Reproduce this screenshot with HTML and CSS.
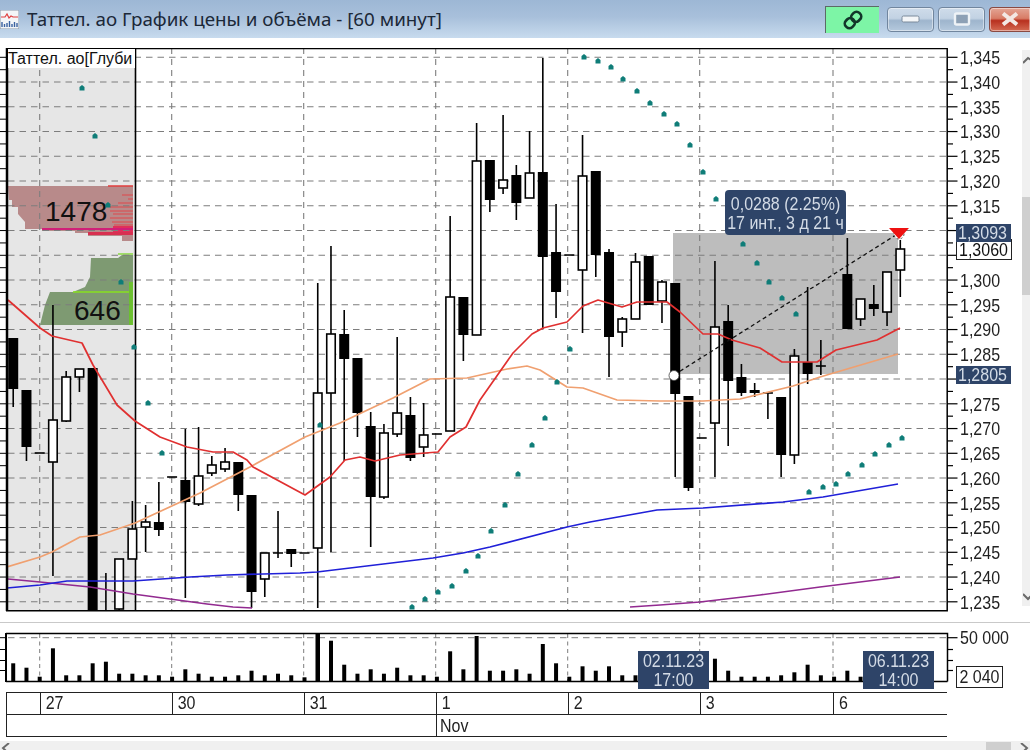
FILE: index.html
```html
<!DOCTYPE html>
<html lang="ru">
<head>
<meta charset="utf-8">
<title>Таттел. ао График цены и объёма</title>
<link rel="stylesheet" href="styles.css">
</head>
<body>
<div class="window">
  <header class="titlebar">
    <svg class="app-icon" viewBox="0 0 19 19">
      <rect x="0" y="0" width="19" height="19" fill="#f4f6f8" stroke="#8a98a8"/>
      <path d="M1 7h4l2-3 2 4 2-2 2 1h5" fill="none" stroke="#e04040" stroke-width="1.2"/>
      <path d="M2 17v-5M4.500 17v-3M7 17v-4M9.500 17v-6M12 17v-3M14.500 17v-5M17 17v-4" stroke="#3a62a0" stroke-width="1.400"/>
    </svg>
    <h1 class="title">Таттел. ао График цены и объёма - [60 минут]</h1>
    <div class="link-box">
      <svg class="link-icon" viewBox="0 0 20 20">
        <g fill="none" stroke="#12362a" stroke-width="2.600" transform="rotate(-45 10 10)">
          <rect x="0.500" y="5.500" width="10" height="9" rx="4"/>
          <rect x="9.500" y="5.500" width="10" height="9" rx="4"/>
        </g>
      </svg>
    </div>
    <button class="winbtn">
      <svg class="glyph" viewBox="0 0 20 10"><rect x="1" y="2" width="17" height="6" rx="1.500" fill="#f4f6f8" stroke="#7b8a9b"/></svg>
    </button>
    <button class="winbtn">
      <svg class="glyph" viewBox="0 0 20 14"><rect x="3" y="1.500" width="14" height="11" rx="1.500" fill="#8da0b5" stroke="#eef2f6" stroke-width="2.400"/></svg>
    </button>
    <button class="winbtn closebtn">
      <svg class="glyph" viewBox="0 0 20 14"><path d="M3 1.500L17 12.500M17 1.500L3 12.500" stroke="#f3e8e4" stroke-width="4"/></svg>
    </button>
  </header>

  <section class="price-row">
    <div class="price-plot">
      <svg id="price" class="plot-svg" viewBox="0 48 958 564" width="958" height="564"></svg>
      <div class="pane-label">Таттел. ао[Глуби</div>
      <div class="measure"><span class="tall">0,0288 (2.25%)</span><span class="tall">17 инт., 3 д 21 ч</span></div>
    </div>
    <div class="price-axis">
      <span>1,345</span><span>1,340</span><span>1,335</span><span>1,330</span><span>1,325</span><span>1,320</span>
      <span>1,315</span><span class="covered">1,310</span><span class="covered">1,305</span><span>1,300</span><span>1,295</span><span>1,290</span>
      <span>1,285</span><span class="covered">1,280</span><span>1,275</span><span>1,270</span><span>1,265</span><span>1,260</span>
      <span>1,255</span><span>1,250</span><span>1,245</span><span>1,240</span><span>1,235</span>
      <div class="tag tag-plain tag-last"><b class="tall">1,3060</b></div>
      <div class="tag tag-dark tag-high"><b class="tall">1,3093</b></div>
      <div class="tag tag-dark tag-low"><b class="tall">1,2805</b></div>
    </div>
    <div class="vscroll">
      <svg class="chev chev-up" viewBox="0 0 8 8"><path d="M0 7L5 2L8 4" fill="none" stroke="#6a6a6a" stroke-width="2"/></svg>
      <div class="vthumb"></div>
      <svg class="chev chev-down" viewBox="0 0 8 8"><path d="M0 1L5 6L8 3" fill="none" stroke="#6a6a6a" stroke-width="2"/></svg>
    </div>
  </section>

  <section class="volume-row">
    <svg id="volume" class="plot-svg" viewBox="0 628 958 62" width="958" height="62"></svg>
    <div class="volume-axis">
      <span class="volume-top tall">50 000</span>
      <span class="volume-now"><b class="tall">2 040</b></span>
    </div>
    <div class="datebox datebox-a"><span class="tall">02.11.23</span><span class="tall">17:00</span></div>
    <div class="datebox datebox-b"><span class="tall">06.11.23</span><span class="tall">14:00</span></div>
  </section>

  <section class="dates">
    <div class="day-row">
      <div class="cell"></div>
      <div class="cell"><span class="mid">27</span></div>
      <div class="cell"><span class="mid">30</span></div>
      <div class="cell"><span class="mid">31</span></div>
      <div class="cell"><span class="mid">1</span></div>
      <div class="cell"><span class="mid">2</span></div>
      <div class="cell"><span class="mid">3</span></div>
      <div class="cell"><span class="mid">6</span></div>
    </div>
    <div class="month-row">
      <div class="cell"></div>
      <div class="cell"><span class="mid">Nov</span></div>
    </div>
  </section>

  <footer class="hscroll">
    <svg class="hchev" viewBox="0 0 10 8"><path d="M9 0L3 5L6 8" fill="none" stroke="#6a6a6a" stroke-width="2"/></svg>
    <div class="hthumb"></div>
    <svg class="hchev" viewBox="0 0 10 8"><path d="M1 0L7 5L4 8" fill="none" stroke="#6a6a6a" stroke-width="2"/></svg>
  </footer>
</div>
<script src="chart.js"></script>
</body>
</html>
```

FILE: styles.css
```css
* { box-sizing: border-box; }
html, body { margin: 0; padding: 0; background: #fff; }
body { width: 1030px; height: 750px; overflow: hidden; font-family: "Liberation Sans", Arial, sans-serif; color: #1a1a1a; }
.window { width: 1030px; height: 750px; display: flex; flex-direction: column; filter: blur(.3px); }
.tall { display: block; font-weight: 400; transform: scaleY(1.2); }
.mid { display: inline-block; transform: scaleY(1.1); }

.titlebar { height: 38px; flex: none; display: flex; align-items: center; background: linear-gradient(#9db7d5, #a8c0db 45%, #c8dbee); padding-right: 0; }
.app-icon { width: 19px; height: 19px; flex: none; margin-left: 0; margin-top: 1px; }
.title { flex: 1; margin: 0 0 0 8px; font: 400 18.800px "Noto Sans", sans-serif; color: #1b2838; white-space: nowrap; }
.link-box { width: 54px; height: 27px; margin-right: 8px; background: #7df5a6; border-left: 1px solid #5c6a66; border-top: 1px solid #5c6a66; display: flex; align-items: center; justify-content: center; }
.link-icon { width: 20px; height: 20px; }
.winbtn { width: 47px; height: 25px; margin: 0 4px 0 0; padding: 0; border: 1px solid #71869e; border-radius: 4px; background: linear-gradient(#cfdcea, #c2d2e3 45%, #9eb5cd 55%, #b5c9dd); box-shadow: inset 0 0 0 1px rgba(255,255,255,.45); display: flex; align-items: center; justify-content: center; }
.closebtn { width: 41px; margin-right: 0; border-color: #8a4a42; border-right: none; border-radius: 4px 0 0 4px; background: linear-gradient(#e3a595, #d87c66 45%, #b8301f 55%, #d46a52); }
.glyph { width: 20px; height: 14px; }

.price-row { position: relative; height: 585px; flex: none; display: flex; padding-top: 7px; border-bottom: 1px solid #c9c9c9; }
.price-plot { position: relative; width: 958px; flex: none; margin-top: 3px; height: 564px; }
.plot-svg { display: block; }
.pane-label { position: absolute; left: 8px; top: 1px; width: 127px; height: 19px; background: #fff; font-size: 16px; line-height: 20px; white-space: nowrap; color: #111; }
.measure { position: absolute; left: 725px; top: 142px; width: 121px; height: 45px; background: #2e4468; border-radius: 4px; color: #d3dbe6; font-size: 16px; line-height: 19px; text-align: center; white-space: nowrap; padding-top: 4px; }

.price-axis { position: relative; width: 64px; flex: none; display: flex; flex-direction: column; font-size: 16px; color: #222; }
.price-axis > span { height: 24.750px; line-height: 25px; padding-left: 2px; flex: none; transform: scaleY(1.2); }
.price-axis > .covered { visibility: hidden; }
.tag { position: absolute; left: -2px; padding-left: 2px; font-size: 16px; white-space: nowrap; }
.tag-dark { background: #2e4468; color: #d3dbe6; width: 55px; height: 18px; line-height: 18px; }
.tag-plain { background: #fff; border: 1.500px solid #222; width: 56px; height: 21px; line-height: 19px; top: 194px; color: #111; }
.tag-high { top: 179px; }
.tag-low { top: 321px; }

.vscroll { position: relative; width: 8px; flex: none; height: 556px; margin-top: 5px; background: #f0f0f0; }
.vthumb { position: absolute; left: 0; top: 147px; width: 8px; height: 98px; background: #cfcfcf; }
.chev { position: absolute; left: 1px; width: 8px; height: 8px; }
.chev-up { top: 6px; }
.chev-down { top: 543px; }

.volume-row { position: relative; height: 62px; flex: none; margin-top: 5px; }
.volume-axis { position: absolute; left: 958px; top: 0; font-size: 16px; color: #222; }
.volume-top { position: absolute; left: 2px; top: 1px; line-height: 18px; white-space: nowrap; }
.volume-now { position: absolute; left: -2px; top: 38px; width: 47px; height: 22px; border: 1.500px solid #222; background: #fff; line-height: 19px; text-align: center; white-space: nowrap; }
.datebox { position: absolute; top: 23px; width: 71px; height: 38px; background: #2e4468; color: #d3dbe6; font-size: 16px; line-height: 19px; text-align: center; white-space: nowrap; }
.datebox-a { left: 638px; }
.datebox-b { left: 863px; }

.dates { margin: 2px 0 0 6px; width: 941px; flex: none; border-top: 1.500px solid #222; border-bottom: 1.500px solid #222; height: 45px; display: flex; flex-direction: column; font-size: 16px; color: #222; }
.day-row { height: 22px; flex: none; display: grid; grid-template-columns: 33.700px 132px 132px 132px 132px 132px 133.300px 113px; border-bottom: 1.500px solid #222; }
.month-row { flex: 1; display: grid; grid-template-columns: 430px 1fr; }
.cell { border-left: 1.500px solid #222; padding-left: 5px; line-height: 19px; }
.month-row .cell + .cell { padding-left: 3px; line-height: 21px; }

.hscroll { flex: none; margin-top: 4px; height: 10px; background: #f0f0f0; display: flex; align-items: center; padding: 0; }
.hchev { width: 10px; height: 8px; flex: none; margin-top: 2px; }
.hthumb { width: 25px; height: 9px; margin: 1px 9px 0 auto; background: #cfcfcf; }
```

FILE: chart.js
```js
var NS = "http://www.w3.org/2000/svg";
function add(svg, name, attrs) {
  var el = document.createElementNS(NS, name);
  for (var k in attrs) el.setAttribute(k, attrs[k]);
  svg.appendChild(el);
  return el;
}
var INK = "#000", GRID = "#7d7d7d";
function cx(i) { return 39.7 + 13.24 * (i - 2); }
var vGrid = [39.7, 171.7, 303.7, 435.7, 567.7, 699.7, 833];

/* ---------- price pane ---------- */
var p = document.getElementById("price");
var defs = add(p, "defs", {});
var clip = document.createElementNS(NS, "clipPath");
clip.setAttribute("id", "frame");
defs.appendChild(clip);
add(clip, "rect", { x: 7, y: 48, width: 940, height: 562.5 });
var body = add(p, "g", { "clip-path": "url(#frame)" });

add(body, "rect", { x: 7, y: 48, width: 128, height: 563, fill: "#e6e6e6" });

/* depth histogram */
add(body, "path", { fill: "#b88a8a", d: "M8 186H133V241H122V236H88V233H75V231H42V229H25V222L18 214V207H12V200H9Z" });
["195:122", "199:128", "203:118", "207:110", "211:110", "214:113", "218:110", "222:112", "225:114"].forEach(function (s) {
  var a = s.split(":");
  add(body, "path", { d: "M" + a[1] + " " + a[0] + "H133", stroke: "#e0474a", "stroke-width": 1 });
});
add(body, "path", { d: "M108 186H133", stroke: "#e03c3c", "stroke-width": 1.5 });
add(body, "rect", { x: 113, y: 226, width: 20, height: 6, fill: "#e0305a" });
add(body, "rect", { x: 88, y: 232, width: 45, height: 3, fill: "#d83050" });
add(body, "path", { d: "M42 229H133", stroke: "#d02078", "stroke-width": 2 });
add(body, "path", { fill: "#7e9a72", d: "M40 325L45 305L50 292H73L85 287L90 277L91 258H118L122 255H133V325Z" });
add(body, "path", { d: "M73 292H133", stroke: "#88e020", "stroke-width": 1.500 });
add(body, "path", { d: "M118 254H133", stroke: "#88d840", "stroke-width": 1.500 });
add(body, "rect", { x: 129, y: 282, width: 4, height: 43, fill: "#6cc030" });

/* measure area */
add(body, "rect", { x: 673, y: 233, width: 225, height: 141, fill: "#bdbdbd" });

/* grid */
var k, y;
for (k = 0; k <= 22; k++) {
  y = 57.3 + 24.75 * k;
  add(body, "path", { d: "M8 " + y + "H947", stroke: GRID, "stroke-width": 1.100, "stroke-dasharray": "6.500 5" });
}
vGrid.forEach(function (x) {
  add(body, "path", { d: "M" + x + " 48V611", stroke: GRID, "stroke-width": 1.100, "stroke-dasharray": "6 5" });
});

/* pane text */
function bigText(x, y, s) {
  var t = add(body, "text", { x: x, y: y, "font-family": "Liberation Sans", "font-size": 28, fill: "#111" });
  t.textContent = s;
}
bigText(45, 221, "1478");
bigText(74, 320, "646");
add(body, "path", { d: "M135.500 48V611", stroke: INK, "stroke-width": 1.600 });

/* candles: index, high, low, body top, body bottom, f=filled h=hollow d=doji w=wick */
var C = [
  [0,338,407,338,389,"f"],[1,390,461,390,447,"f"],[2,453,453,453,453,"d"],[3,305,576,420,462,"h"],
  [4,371,422,377,421,"h"],[5,369,392,369,377,"h"],[6,368,612,368,612,"f"],[7,573,612,0,0,"w"],
  [8,559,610,559,609,"h"],[9,501,559,529,559,"h"],[10,505,552,522,527,"h"],[11,482,536,522,530,"f"],
  [12,477,477,477,477,"d"],[13,429,598,480,502,"f"],[14,427,506,476,504,"h"],[15,456,476,465,473,"h"],
  [16,448,472,462,469,"h"],[17,462,511,462,495,"f"],[18,495,608,495,592,"f"],[19,553,597,553,579,"h"],
  [20,511,558,553,553,"d"],[21,549,567,549,554,"f"],[22,553,553,553,553,"d"],[23,283,608,393,548,"h"],
  [24,246,552,334,393,"h"],[25,310,461,334,359,"f"],[26,358,437,358,413,"f"],[27,412,547,426,497,"f"],
  [28,424,499,433,497,"h"],[29,337,437,413,434,"h"],[30,397,461,415,458,"f"],[31,403,457,435,447,"h"],
  [32,434,434,434,434,"d"],[33,216,431,297,431,"h"],[34,297,361,297,335,"f"],[35,123,335,161,335,"h"],
  [36,160,212,160,200,"f"],[37,115,194,180,188,"h"],[38,165,220,175,203,"f"],[39,131,198,173,198,"h"],
  [40,58,329,172,257,"f"],[41,204,318,252,292,"f"],[42,255,255,255,255,"d"],[43,135,333,176,270,"h"],
  [44,171,277,171,255,"f"],[45,249,377,252,337,"f"],[46,317,347,319,332,"h"],[47,253,319,262,319,"h"],
  [48,256,305,256,305,"f"],[49,280,323,282,301,"h"],[50,283,477,283,394,"f"],[51,396,491,396,488,"f"],
  [52,438,438,438,438,"d"],[53,261,477,327,423,"h"],[54,305,446,321,381,"f"],[55,364,396,377,393,"f"],
  [56,383,397,390,393,"f"],[57,393,419,393,393,"d"],[58,397,477,397,455,"f"],[59,349,464,356,455,"h"],
  [60,287,384,362,374,"f"],[61,340,375,366,366,"d"],[63,238,329,274,329,"f"],[64,299,326,299,319,"h"],
  [65,285,316,304,309,"f"],[66,272,326,272,312,"h"],[67,240,297,249,270,"h"]
];
C.forEach(function (c) {
  var x = cx(c[0]);
  add(body, "path", { d: "M" + x + " " + c[1] + "V" + c[2], stroke: INK, "stroke-width": 1.600 });
  if (c[5] === "f") {
    add(body, "rect", { x: x - 5, y: c[3], width: 10, height: c[4] - c[3], fill: INK });
  } else if (c[5] === "h") {
    add(body, "rect", { x: x - 4.25, y: c[3], width: 8.5, height: c[4] - c[3], fill: "#fff", stroke: INK, "stroke-width": 1.600 });
  } else if (c[5] === "d") {
    add(body, "path", { d: "M" + (x - 5) + " " + c[3] + "H" + (x + 5), stroke: INK, "stroke-width": 1.600 });
  }
});

/* moving averages */
function line(svg, pts, color, w) {
  add(svg, "polyline", { points: pts, fill: "none", stroke: color, "stroke-width": w, "stroke-linejoin": "round" });
}
line(body, "8,579 40,582 90,587 133,594 207,604 233,607 252,608", "#922a90", 1.700);
line(body, "630,607 660,605 700,602 760,595 820,587 900,577", "#922a90", 1.700);
line(body, "7,588 40,585 67,581 133,581 190,577 227,575 300,573 317,572 433,558 463,553 490,547 567,527 590,522 657,510 703,508 783,502 823,497 898,484", "#2020d8", 1.700);
line(body, "7,567 40,557 52,552 80,537 100,535 135,523 200,493 250,467 305,437 340,423 393,398 430,379 467,378 507,369 527,366 540,370 567,387 583,388 617,400 660,401 703,401 740,399 793,386 820,377 898,354", "#f0a070", 1.700);
line(body, "8,300 40,328 52,336 82,343 93,365 117,405 135,421 160,437 187,447 213,452 233,452 247,460 253,467 305,495 330,477 345,460 360,457 375,461 400,455 438,452 450,437 466,427 480,400 513,353 532,334 543,328 567,322 583,306 598,300 622,307 637,302 667,302 680,312 703,334 718,334 732,340 760,348 782,362 817,362 836,350 877,340 900,328", "#e03030", 1.700);

/* parabolic dots */
var D = [[82,88],[95,136],[108,205],[121,282],[134,347],[148,403],[162,453],[320,425],[412,607],[425,599],[438,592],[452,586],[466,571],[478,556],[491,531],[505,505],[518,474],[532,445],[545,418],[557,382],[570,349],[584,57],[598,61],[611,67],[623,79],[637,91],[650,103],[664,114],[677,124],[690,145],[703,172],[716,199],[743,244],[757,263],[769,282],[782,298],[796,314],[809,492],[823,487],[836,484],[848,474],[862,465],[875,454],[889,445],[902,438]];
D.forEach(function (d) {
  add(body, "path", { d: "M" + (d[0] - 2.5) + " " + (d[1] + 2.5) + "V" + (d[1] - 1) + "L" + d[0] + " " + (d[1] - 3) + "L" + (d[0] + 2.5) + " " + (d[1] - 1) + "V" + (d[1] + 2.5) + "Z", fill: "#0f7d78" });
});

/* measure diagonal and handles */
add(body, "path", { d: "M674 375L899 233", stroke: "#111", "stroke-width": 1.300, "stroke-dasharray": "4 3", fill: "none" });
add(body, "circle", { cx: 674, cy: 375.500, r: 5, fill: "#fff", stroke: "#444", "stroke-width": 0.800 });
add(body, "circle", { cx: 899, cy: 234, r: 5, fill: "#fff", stroke: "#333", "stroke-width": 0.800, "stroke-dasharray": "2 2" });
add(body, "path", { d: "M889 228H909L899 239Z", fill: "#ee1111" });

/* frame and ticks */
add(p, "path", { d: "M7 48V611", stroke: INK, "stroke-width": 2.500 });
add(p, "path", { d: "M6 48.500H947.200V610.800H6", stroke: INK, "stroke-width": 1.500, fill: "none" });
for (k = 0; k <= 44; k++) {
  y = 57.3 + 12.375 * k;
  add(p, "path", { d: "M0 " + y + "H6", stroke: INK, "stroke-width": 1 });
  add(p, "path", { d: "M947 " + y + "H" + (k % 2 ? 953 : 957.500), stroke: INK, "stroke-width": 1.200 });
}

/* ---------- volume pane ---------- */
var v = document.getElementById("volume");
vGrid.forEach(function (x) {
  add(v, "path", { d: "M" + x + " 634V681", stroke: GRID, "stroke-width": 1, "stroke-dasharray": "4 3.500" });
});
add(v, "path", { d: "M8 637.700H947", stroke: GRID, "stroke-width": 1, "stroke-dasharray": "6.500 5" });
var V = [663.3,667.7,676.7,648.3,675.3,675.3,663.3,661.7,673.7,673.7,675.3,675.3,676.7,669.3,673.7,676.7,676.7,675.3,670.7,675.3,673.7,675.3,677.3,633.3,640.7,664.7,673.7,669.3,673.7,667.7,675.3,675.3,676.7,651.3,669.3,636,670.7,670.7,669.3,673.7,644,663.3,676.7,666.3,670.7,666.3,675.3,675.3,0,0,0,0,0,658.7,670.7,676.7,676.7,676.7,675.3,672.3,664.7,675.3,676.7,670.7,676.7];
V.forEach(function (top, i) {
  if (!top) return;
  var w = i === 23 ? 4.500 : 4;
  add(v, "path", { d: "M" + cx(i) + " " + top + "V681.500", stroke: "#000", "stroke-width": w });
});
add(v, "path", { d: "M6 681.500H947.500", stroke: INK, "stroke-width": 1.500 });
add(v, "path", { d: "M6 633.500H947.500V681.500", stroke: INK, "stroke-width": 1.500, fill: "none" });
add(v, "path", { d: "M6 633V682", stroke: INK, "stroke-width": 2 });
[637.7, 649.5, 660.5, 670.5].forEach(function (y, i) {
  add(v, "path", { d: "M947 " + y + "H" + (i === 0 ? 957.500 : 953), stroke: INK, "stroke-width": 1.200 });
  add(v, "path", { d: "M0 " + y + "H6", stroke: INK, "stroke-width": 1 });
});
```
